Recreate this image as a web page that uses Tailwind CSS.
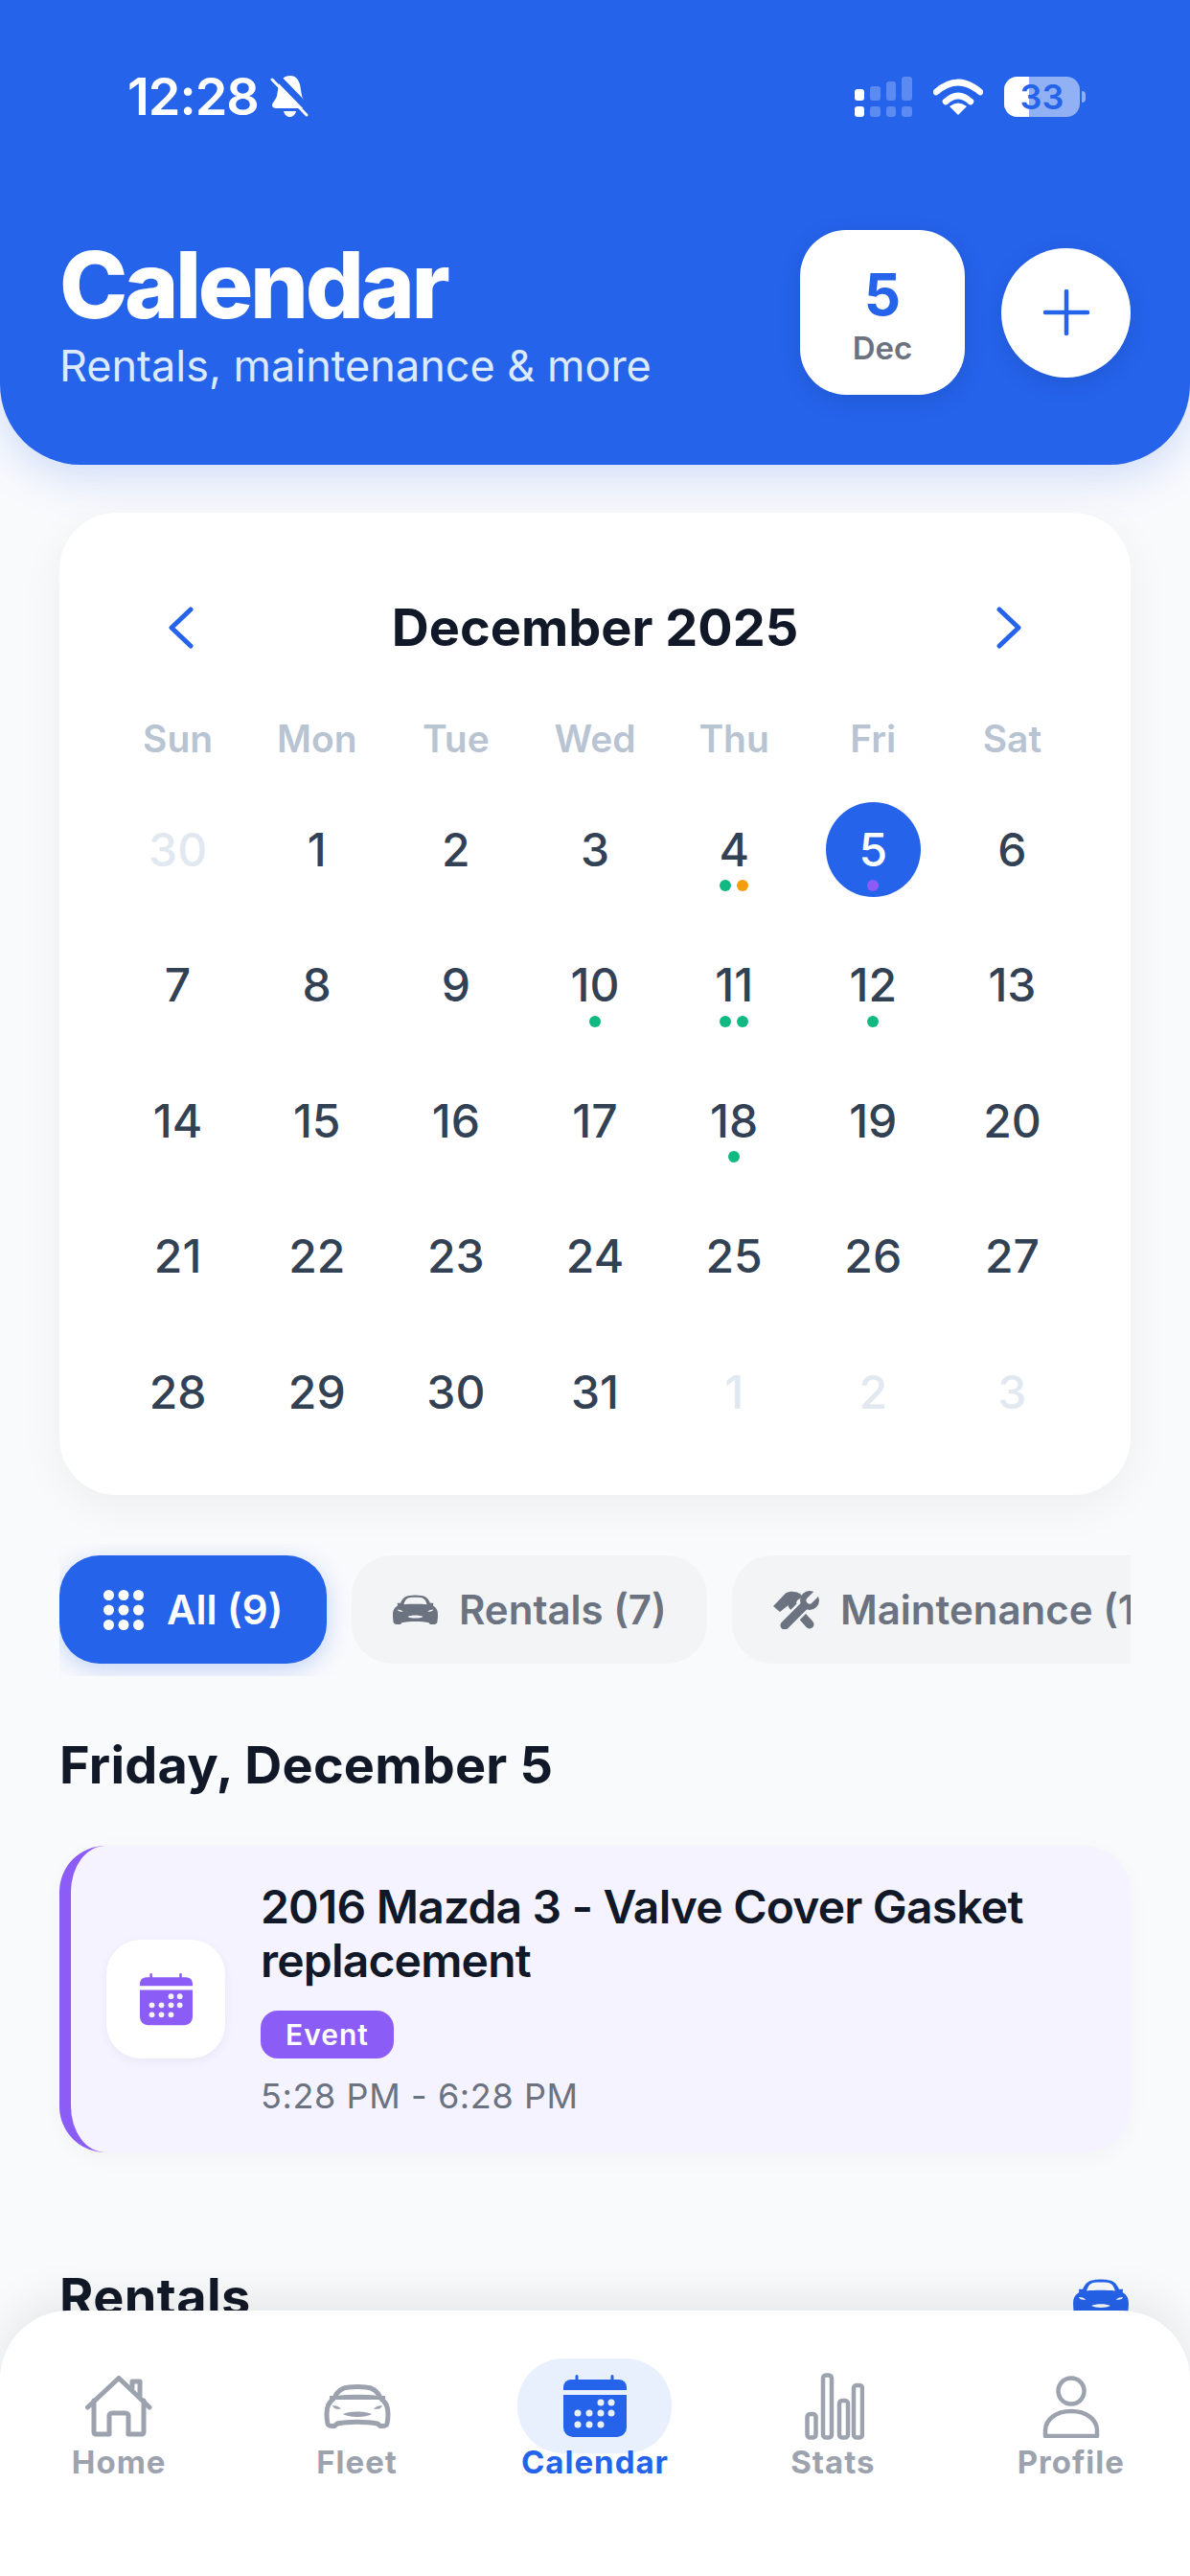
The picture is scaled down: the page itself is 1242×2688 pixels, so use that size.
<!DOCTYPE html>
<html lang="en">
<head>
  <meta charset="UTF-8" />
  <meta name="viewport" content="width=device-width, initial-scale=1.0"/>
  <title>Calendar</title>
  <script src="https://cdn.jsdelivr.net/npm/@tailwindcss/browser@4"></script>
</head>
<body class="bg-[#f9fafc]">
<div class="relative w-[1242px] h-[2688px] overflow-hidden bg-[#f9fafc] font-[Inter,sans-serif]">

  <!-- Header -->
  <header class="relative h-[485px] bg-[#2563eb] rounded-b-[84px] shadow-[0_12px_48px_rgba(37,99,235,0.2)] text-white">
    <div class="flex items-start justify-between pt-[79px] pl-[133px] pr-[109px] h-[240px]">
      <div class="flex items-center gap-[12px] h-[43px]">
        <span class="text-[54px] leading-[43px] font-semibold tracking-[-1px]">12:28</span>
        <svg width="40" height="43" viewBox="0 0 40 43" fill="none">
          <path d="M21 0C26 0 29 3 31 9L33 21C34 25 38 28 38 31C38 33 37 34 35 34H6C4 34 2 33 2 31C2 28 6 25 7 21L9 9C11 3 16 0 21 0Z" fill="white"/>
          <path d="M14 37H27C26 41 23 43 20.500 43C18 43 15 41 14 37Z" fill="white"/>
          <path d="M7 1L41 36" stroke="#2563eb" stroke-width="7"/>
          <path d="M2 4L38 41" stroke="white" stroke-width="3" stroke-linecap="round"/>
        </svg>
      </div>
      <div class="flex items-center gap-[22px] h-[43px]">
        <svg width="60" height="42" viewBox="0 0 60 42" fill="white">
          <rect x="0" y="13" width="10" height="12" rx="3"/>
          <rect x="0" y="31" width="10" height="11" rx="3"/>
          <rect x="16" y="10" width="11" height="15" rx="3" opacity="0.25"/>
          <rect x="16" y="31" width="11" height="11" rx="3" opacity="0.25"/>
          <rect x="33" y="5" width="10" height="20" rx="3" opacity="0.25"/>
          <rect x="33" y="31" width="10" height="11" rx="3" opacity="0.25"/>
          <rect x="49" y="0" width="11" height="25" rx="3" opacity="0.25"/>
          <rect x="49" y="31" width="11" height="11" rx="3" opacity="0.25"/>
        </svg>
        <svg width="52" height="38" viewBox="0 0 52 38" fill="none">
          <path d="M3 14Q26 -6 49 14" stroke="white" stroke-width="6.500" stroke-linecap="round"/>
          <path d="M13 24Q26 12 39 24" stroke="white" stroke-width="6.500" stroke-linecap="round"/>
          <path d="M17 29Q26 22 35 29L26 38Z" fill="white"/>
        </svg>
        <div class="flex items-center gap-[2px]">
          <div class="relative w-[79px] h-[42px] rounded-[14px] bg-white/50 overflow-hidden flex items-center justify-center">
            <div class="absolute left-0 top-0 bottom-0 w-[26px] bg-white"></div>
            <span class="relative text-[36px] leading-[42px] font-semibold text-[#2563eb]">33</span>
          </div>
          <div class="w-[4px] h-[12px] rounded-r-full bg-white/50"></div>
        </div>
      </div>
    </div>
    <div class="flex items-center justify-between pl-[62px] pr-[62px]">
      <div class="flex flex-col mt-[3px]">
        <h1 class="text-[96px] leading-[100px] font-extrabold tracking-[-3.400px]">Calendar</h1>
        <p class="text-[45px] leading-[52px] text-[#dbeafe] mt-[9px]">Rentals, maintenance &amp; more</p>
      </div>
      <div class="flex items-center gap-[38px]">
        <div class="w-[172px] h-[172px] pt-[6px] rounded-[48px] bg-white shadow-[0_6px_24px_rgba(0,0,0,0.1)] flex flex-col items-center justify-center">
          <span class="text-[60px] leading-[68px] font-bold text-[#2563eb]">5</span>
          <span class="text-[33px] leading-[44px] font-semibold text-[#6b7280]">Dec</span>
        </div>
        <div class="w-[135px] h-[135px] rounded-full bg-white shadow-[0_6px_24px_rgba(0,0,0,0.1)] flex items-center justify-center">
          <svg width="48" height="48" viewBox="0 0 48 48" fill="none" stroke="#2563eb" stroke-width="4.500" stroke-linecap="round">
            <path d="M24 2V46M2 24H46"/>
          </svg>
        </div>
      </div>
    </div>
  </header>

  <!-- Month card -->
  <section class="relative mx-[62px] mt-[50px] bg-white rounded-[60px] px-[51px] pt-[90px] pb-[58px] shadow-[0_12px_48px_rgba(0,0,0,0.05)]">
    <div class="flex items-center justify-between h-[60px] px-[63px]">
      <svg width="26" height="44" viewBox="0 0 26 44" fill="none" stroke="#2563eb" stroke-width="5" stroke-linecap="round" stroke-linejoin="round"><path d="M23 3L3 22L23 41"/></svg>
      <h2 class="text-[54px] leading-[60px] font-bold text-[#111827]">December 2025</h2>
      <svg width="26" height="44" viewBox="0 0 26 44" fill="none" stroke="#2563eb" stroke-width="5" stroke-linecap="round" stroke-linejoin="round"><path d="M3 3L23 22L3 41"/></svg>
    </div>
    <div class="grid grid-cols-7 mt-[62px] text-center text-[39px] leading-[48px] font-semibold text-[#b8c4d2]">
      <span>Sun</span><span>Mon</span><span>Tue</span><span>Wed</span><span>Thu</span><span>Fri</span><span>Sat</span>
    </div>
    <div class="grid grid-cols-7 gap-y-[42.5px] mt-[42px] text-[48px] font-medium text-[#334155] text-center">
      <div class="h-[99px] flex items-center justify-center text-[#e2e8f0]">30</div>
      <div class="h-[99px] flex items-center justify-center">1</div>
      <div class="h-[99px] flex items-center justify-center">2</div>
      <div class="h-[99px] flex items-center justify-center">3</div>
      <div class="relative h-[99px] flex items-center justify-center">4
        <div class="absolute bottom-[6px] left-0 right-0 flex justify-center gap-[6px]"><i class="w-[12px] h-[12px] rounded-full bg-[#10b981]"></i><i class="w-[12px] h-[12px] rounded-full bg-[#f59e0b]"></i></div>
      </div>
      <div class="relative h-[99px] flex items-center justify-center">
        <div class="relative w-[99px] h-[99px] rounded-full bg-[#2563eb] text-white flex items-center justify-center">5
          <i class="absolute bottom-[6px] left-[43.500px] w-[12px] h-[12px] rounded-full bg-[#8b5cf6]"></i>
        </div>
      </div>
      <div class="h-[99px] flex items-center justify-center">6</div>

      <div class="h-[99px] flex items-center justify-center">7</div>
      <div class="h-[99px] flex items-center justify-center">8</div>
      <div class="h-[99px] flex items-center justify-center">9</div>
      <div class="relative h-[99px] flex items-center justify-center">10
        <div class="absolute bottom-[6px] left-0 right-0 flex justify-center"><i class="w-[12px] h-[12px] rounded-full bg-[#10b981]"></i></div>
      </div>
      <div class="relative h-[99px] flex items-center justify-center">11
        <div class="absolute bottom-[6px] left-0 right-0 flex justify-center gap-[6px]"><i class="w-[12px] h-[12px] rounded-full bg-[#10b981]"></i><i class="w-[12px] h-[12px] rounded-full bg-[#10b981]"></i></div>
      </div>
      <div class="relative h-[99px] flex items-center justify-center">12
        <div class="absolute bottom-[6px] left-0 right-0 flex justify-center"><i class="w-[12px] h-[12px] rounded-full bg-[#10b981]"></i></div>
      </div>
      <div class="h-[99px] flex items-center justify-center">13</div>

      <div class="h-[99px] flex items-center justify-center">14</div>
      <div class="h-[99px] flex items-center justify-center">15</div>
      <div class="h-[99px] flex items-center justify-center">16</div>
      <div class="h-[99px] flex items-center justify-center">17</div>
      <div class="relative h-[99px] flex items-center justify-center">18
        <div class="absolute bottom-[6px] left-0 right-0 flex justify-center"><i class="w-[12px] h-[12px] rounded-full bg-[#10b981]"></i></div>
      </div>
      <div class="h-[99px] flex items-center justify-center">19</div>
      <div class="h-[99px] flex items-center justify-center">20</div>

      <div class="h-[99px] flex items-center justify-center">21</div>
      <div class="h-[99px] flex items-center justify-center">22</div>
      <div class="h-[99px] flex items-center justify-center">23</div>
      <div class="h-[99px] flex items-center justify-center">24</div>
      <div class="h-[99px] flex items-center justify-center">25</div>
      <div class="h-[99px] flex items-center justify-center">26</div>
      <div class="h-[99px] flex items-center justify-center">27</div>

      <div class="h-[99px] flex items-center justify-center">28</div>
      <div class="h-[99px] flex items-center justify-center">29</div>
      <div class="h-[99px] flex items-center justify-center">30</div>
      <div class="h-[99px] flex items-center justify-center">31</div>
      <div class="h-[99px] flex items-center justify-center text-[#e2e8f0]">1</div>
      <div class="h-[99px] flex items-center justify-center text-[#e2e8f0]">2</div>
      <div class="h-[99px] flex items-center justify-center text-[#e2e8f0]">3</div>
    </div>
  </section>

  <!-- Filters -->
  <div class="relative mx-[62px] mt-[51px] pt-[12px] pb-[13px] flex gap-[26px] overflow-hidden text-[42px] leading-[52px] font-semibold">
    <div class="shrink-0 w-[279px] h-[113px] rounded-[42px] bg-[#2563eb] text-white shadow-[0_6px_24px_rgba(37,99,235,0.25)] flex items-center pl-[46px] gap-[24px]">
      <svg width="42" height="42" viewBox="0 0 42 42" fill="white">
        <circle cx="5.500" cy="5.500" r="5.500"/><circle cx="21" cy="5.500" r="5.500"/><circle cx="36.500" cy="5.500" r="5.500"/>
        <circle cx="5.500" cy="21" r="5.500"/><circle cx="21" cy="21" r="5.500"/><circle cx="36.500" cy="21" r="5.500"/>
        <circle cx="5.500" cy="36.500" r="5.500"/><circle cx="21" cy="36.500" r="5.500"/><circle cx="36.500" cy="36.500" r="5.500"/>
      </svg>
      <span>All (9)</span>
    </div>
    <div class="shrink-0 w-[371px] h-[113px] rounded-[42px] bg-[#f3f4f6] text-[#6b7280] flex items-center pl-[43px] gap-[22px]">
      <svg width="47" height="31" viewBox="0 0 70 46" fill="#6b7280" fill-rule="evenodd">
        <path d="M12 13C15 6 19 2 26 1.500C31 .5 39 .5 44 1.500C51 2 55 6 58 13L63 13L62.500 17C67 20 70 23 70 31C70 36 69.500 40 69 43C68 45 66 46 63 46L58 46L56 43.500C45 41 25 41 14 43.500L12 46L7 46C4 46 2 45 1 43C.5 40 0 36 0 31C0 23 3 20 7.500 17L7 13ZM17 15C26 14 44 14 53 15C51 8 48 5 43 4.500C38 4 32 4 27 4.500C22 5 19 8 17 15ZM7 23C8 26 12 27 16 26C14 24 10 23 7 23ZM63 23C60 23 56 24 54 26C58 27 62 26 63 23ZM23 34C28 37 42 37 47 34C42 31 28 31 23 34Z"/>
      </svg>
      <span>Rentals (7)</span>
    </div>
    <div class="shrink-0 w-[470px] h-[113px] rounded-[42px] bg-[#f3f4f6] text-[#6b7280] flex items-center pl-[43px] gap-[20px]">
      <svg width="50" height="40" viewBox="0 0 50 40" fill="none">
        <path d="M0 16L13 2.500C17 0 23 0 28 3L31 6L25 10L22 18L17 14L7 22Z" fill="#6b7280"/>
        <path d="M20 15L38 35" stroke="#6b7280" stroke-width="9" stroke-linecap="round"/>
        <path d="M13 35L33 15" stroke="#f3f4f6" stroke-width="14"/>
        <path d="M12 36L33 15" stroke="#6b7280" stroke-width="9" stroke-linecap="round"/>
        <circle cx="38" cy="10" r="10" fill="#6b7280"/>
        <path d="M38 10L48 0" stroke="#f3f4f6" stroke-width="7" stroke-linecap="round"/>
      </svg>
      <span class="whitespace-nowrap">Maintenance (1)</span>
    </div>
  </div>

  <!-- Day agenda -->
  <section class="mx-[62px]">
    <h3 class="mt-[60px] text-[54px] leading-[66px] font-bold tracking-[0.2px] text-[#111827]">Friday, December 5</h3>
    <article class="mt-[51px] flex items-center h-[320px] rounded-[48px] border-l-[12px] border-[#8b5cf6] bg-[#f5f3ff] pl-[37px] gap-[37px] shadow-[0_6px_24px_rgba(0,0,0,0.03)]">
      <div class="shrink-0 w-[124px] h-[124px] rounded-[36px] bg-white shadow-[0_3px_12px_rgba(0,0,0,0.05)] flex items-center justify-center">
        <svg width="55" height="55" viewBox="0 0 66 66" fill="#8b5cf6">
          <rect x="12.500" y="0" width="3" height="8" rx="1.500"/><rect x="49.500" y="0" width="3" height="8" rx="1.500"/>
          <path d="M0 16V13a8 8 0 0 1 8-8H58a8 8 0 0 1 8 8V16Z"/>
          <path d="M0 21H66V55a10 10 0 0 1-10 10H10a10 10 0 0 1-10-10Z"/>
          <g fill="#f5f3ff">
            <circle cx="39" cy="29" r="3.500"/><circle cx="50" cy="29" r="3.500"/>
            <circle cx="15" cy="40" r="3.500"/><circle cx="27" cy="40" r="3.500"/><circle cx="39" cy="40" r="3.500"/><circle cx="50" cy="40" r="3.500"/>
            <circle cx="15" cy="52" r="3.500"/><circle cx="27" cy="52" r="3.500"/><circle cx="39" cy="52" r="3.500"/>
          </g>
        </svg>
      </div>
      <div class="flex-1 pr-[40px]">
        <p class="text-[48px] leading-[56px] font-semibold tracking-[-0.8px] text-[#111827]">2016 Mazda 3 - Valve Cover Gasket replacement</p>
        <span class="mt-[24px] w-[139px] h-[50px] rounded-[18px] bg-[#8b5cf6] text-white text-[30px] font-semibold tracking-[1px] flex items-center justify-center">Event</span>
        <p class="mt-[16px] text-[36px] leading-[46px] tracking-[0.6px] text-[#6b7280]">5:28 PM - 6:28 PM</p>
      </div>
    </article>
    <div class="mt-[118px] flex items-start justify-between">
      <h3 class="text-[54px] leading-[66px] font-bold tracking-[0.4px] text-[#111827]">Rentals</h3>
      <svg class="mt-[14px] mr-[2px]" width="58" height="38" viewBox="0 0 70 46" fill="#2563eb" fill-rule="evenodd">
        <path d="M12 13C15 6 19 2 26 1.500C31 .5 39 .5 44 1.500C51 2 55 6 58 13L63 13L62.500 17C67 20 70 23 70 31C70 36 69.500 40 69 43C68 45 66 46 63 46L58 46L56 43.500C45 41 25 41 14 43.500L12 46L7 46C4 46 2 45 1 43C.5 40 0 36 0 31C0 23 3 20 7.500 17L7 13ZM17 15C26 14 44 14 53 15C51 8 48 5 43 4.500C38 4 32 4 27 4.500C22 5 19 8 17 15ZM7 23C8 26 12 27 16 26C14 24 10 23 7 23ZM63 23C60 23 56 24 54 26C58 27 62 26 63 23ZM23 34C28 37 42 37 47 34C42 31 28 31 23 34Z"/>
      </svg>
    </div>
  </section>

  <!-- Bottom tab bar -->
  <nav class="absolute left-0 right-0 bottom-0 h-[277px] rounded-t-[72px] bg-white shadow-[0_-12px_48px_rgba(0,0,0,0.08)] pt-[50px] grid grid-cols-5 text-[33px] leading-[40px] font-bold tracking-[1px] text-[#9ca3af]">
    <div class="flex flex-col items-center">
      <div class="h-[99px] flex items-center justify-center">
        <svg width="70" height="64" viewBox="0 0 70 64" fill="none" stroke="#9ca3af" stroke-width="5" stroke-linecap="round" stroke-linejoin="round">
          <path d="M2.500 33L35 2.500L67 33"/>
          <path d="M9 26V59a2 2 0 0 0 2 2H25V42a3 3 0 0 1 3-3H42a3 3 0 0 1 3 3V61H59a2 2 0 0 0 2-2V26"/>
          <path d="M49 13V6H57V21"/>
        </svg>
      </div>
      <span class="relative mt-[-11px]">Home</span>
    </div>
    <div class="flex flex-col items-center">
      <div class="h-[99px] flex items-center justify-center">
        <svg width="70" height="46" viewBox="0 0 70 46" fill="none" stroke="#9ca3af" stroke-width="5" stroke-linejoin="round">
          <path d="M11 14C14 7 19 3.500 26 3C31 2.500 39 2.500 44 3C51 3.500 56 7 59 14C65 19 67 23 67 31C67 36 66.500 39 66 41C65.500 43 64 43.500 62 43.500H59L56 41C45 38.500 25 38.500 14 41L11 43.500H8C6 43.500 4.500 43 4 41C3.500 39 3 36 3 31C3 23 5 19 11 14Z"/>
          <path d="M6 14H64M11 14C25 12.500 45 12.500 59 14" stroke-width="4"/>
          <g fill="#9ca3af" stroke="none">
            <path d="M9 22C12 22 16 23 18 25.500C14 26.500 10 25.500 9 22Z"/>
            <path d="M61 22C58 22 54 23 52 25.500C56 26.500 60 25.500 61 22Z"/>
            <path d="M20 31C26 27.500 44 27.500 50 31C44 35 26 35 20 31Z"/>
          </g>
        </svg>
      </div>
      <span class="relative mt-[-11px]">Fleet</span>
    </div>
    <div class="flex flex-col items-center">
      <div class="w-[161px] h-[99px] rounded-[48px] bg-[#e9f0fd] flex items-center justify-center">
        <svg width="66" height="66" viewBox="0 0 66 66" fill="#2563eb">
          <rect x="12.500" y="0" width="3" height="8" rx="1.500"/><rect x="49.500" y="0" width="3" height="8" rx="1.500"/>
          <path d="M0 16V13a8 8 0 0 1 8-8H58a8 8 0 0 1 8 8V16Z"/>
          <path d="M0 21H66V55a10 10 0 0 1-10 10H10a10 10 0 0 1-10-10Z"/>
          <g fill="#e9f0fd">
            <circle cx="39" cy="29" r="3.500"/><circle cx="50" cy="29" r="3.500"/>
            <circle cx="15" cy="40" r="3.500"/><circle cx="27" cy="40" r="3.500"/><circle cx="39" cy="40" r="3.500"/><circle cx="50" cy="40" r="3.500"/>
            <circle cx="15" cy="52" r="3.500"/><circle cx="27" cy="52" r="3.500"/><circle cx="39" cy="52" r="3.500"/>
          </g>
        </svg>
      </div>
      <span class="relative mt-[-11px] text-[#2563eb]">Calendar</span>
    </div>
    <div class="flex flex-col items-center">
      <div class="h-[99px] flex items-center justify-center">
        <svg class="ml-[3px]" width="62" height="70" viewBox="0 0 62 70" fill="none" stroke="#9ca3af" stroke-width="4.500">
          <rect x="2.500" y="43" width="9" height="24.500" rx="3"/>
          <rect x="19" y="2.500" width="9" height="65" rx="3"/>
          <rect x="36" y="29" width="9" height="38.500" rx="3"/>
          <rect x="51" y="13" width="9" height="54.500" rx="3"/>
        </svg>
      </div>
      <span class="relative mt-[-11px]">Stats</span>
    </div>
    <div class="flex flex-col items-center">
      <div class="h-[99px] flex items-center justify-center">
        <svg width="60" height="66" viewBox="0 0 60 66" fill="none" stroke="#9ca3af" stroke-width="4.500" stroke-linejoin="round">
          <circle cx="30" cy="17" r="13.500"/>
          <path d="M3 64V58C3 47 14 38 30 38C46 38 57 47 57 58V64Z"/>
        </svg>
      </div>
      <span class="relative mt-[-11px]">Profile</span>
    </div>
  </nav>
</div>
</body>
</html>
